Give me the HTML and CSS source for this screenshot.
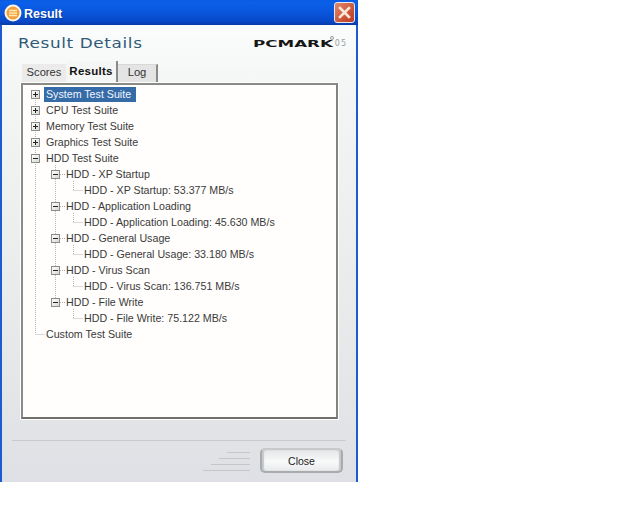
FILE: index.html
```html
<!DOCTYPE html>
<html lang="en">
<head>
<meta charset="utf-8">
<title>Result</title>
<link rel="stylesheet" href="styles.css">
</head>
<body>
<div class="window">
  <header class="titlebar">
    <svg class="appicon" width="18" height="18" viewBox="0 0 18 18"><circle cx="9" cy="9" r="8.5" fill="#fff3e0"/><circle cx="9" cy="9" r="6.5" fill="#f0a040"/><path d="M5 6.5h8M5 9h8M5 11.5h8" stroke="#ffe8b0" stroke-width="1.3"/></svg>
    <span class="title">Result</span>
    <button class="closex" aria-label="Close"><svg width="21" height="21" viewBox="0 0 21 21"><path d="M6 6l9 9M15 6l-9 9" stroke="#fbe6da" stroke-width="2.6" stroke-linecap="square"/></svg></button>
  </header>
  <div class="client">
    <div class="heading">
      <h1>Result Details</h1>
      <div class="logo"><span class="logomark">PCMARK</span><span class="logoyear">05</span></div>
    </div>
    <div class="tabs">
      <span class="tab scores">Scores</span>
      <span class="tab active">Results</span>
      <span class="tab log">Log</span>
    </div>
    <div class="panel">
      <svg class="lines" width="120" height="260" viewBox="0 0 120 260">
        <path d="M12.5 13V249M12.5 249.5H22M32.5 80V213M37 89.5H42M37 121.5H42M37 153.5H42M37 185.5H42M37 217.5H42M50.5 96V105M50.5 105.5H60M50.5 128V137M50.5 137.5H60M50.5 160V169M50.5 169.5H60M50.5 192V201M50.5 201.5H60M50.5 224V233M50.5 233.5H60" fill="none" stroke="#b4b4b4" stroke-dasharray="1 1"/>
      </svg>
      <ul class="tree">
        <li class="row"><span class="box plus"></span><span class="label selected">System Test Suite</span></li>
        <li class="row"><span class="box plus"></span><span class="label">CPU Test Suite</span></li>
        <li class="row"><span class="box plus"></span><span class="label">Memory Test Suite</span></li>
        <li class="row"><span class="box plus"></span><span class="label">Graphics Test Suite</span></li>
        <li class="row"><span class="box minus"></span><span class="label">HDD Test Suite</span></li>
        <li class="row lvl1"><span class="box minus"></span><span class="label">HDD - XP Startup</span></li>
        <li class="row lvl2"><span class="label">HDD - XP Startup: 53.377 MB/s</span></li>
        <li class="row lvl1"><span class="box minus"></span><span class="label">HDD - Application Loading</span></li>
        <li class="row lvl2"><span class="label">HDD - Application Loading: 45.630 MB/s</span></li>
        <li class="row lvl1"><span class="box minus"></span><span class="label">HDD - General Usage</span></li>
        <li class="row lvl2"><span class="label">HDD - General Usage: 33.180 MB/s</span></li>
        <li class="row lvl1"><span class="box minus"></span><span class="label">HDD - Virus Scan</span></li>
        <li class="row lvl2"><span class="label">HDD - Virus Scan: 136.751 MB/s</span></li>
        <li class="row lvl1"><span class="box minus"></span><span class="label">HDD - File Write</span></li>
        <li class="row lvl2"><span class="label">HDD - File Write: 75.122 MB/s</span></li>
        <li class="row leaf"><span class="label">Custom Test Suite</span></li>
      </ul>
    </div>
    <div class="footer">
      <svg class="stripes" width="50" height="24" viewBox="0 0 50 24"><path d="M25 3.5H48M17 9.5H48M9 15.5H48M1 21.5H48" stroke="#c4c6c8" fill="none"/></svg>
      <button class="closebtn">Close</button>
    </div>
  </div>
</div>
</body>
</html>
```
FILE: styles.css
```css
html, body { margin: 0; padding: 0; background: #fff; }
body { width: 640px; height: 512px; overflow: hidden; font-family: "Liberation Sans", Arial, sans-serif; }
.window {
  width: 358px; height: 482px; display: flex; flex-direction: column; box-sizing: border-box;
  border-left: 2px solid #1f5bd0; border-right: 2px solid #1f5bd0;
}
.titlebar {
  height: 25px; margin: 0 -2px; flex: none; display: flex; align-items: center; padding: 0 2px 0 4px;
  background: linear-gradient(#0a5ae0 0, #0a60ea 8%, #0a56dc 50%, #0848c8 85%, #083aa8 100%);
}
.appicon { flex: none; }
.title { margin-left: 2px; padding-top: 2px; flex: 1; color: #fff; font-size: 12.5px; font-weight: bold; text-shadow: 1px 1px 0 #0a3a9a; }
.closex {
  width: 21px; height: 21px; padding: 0; display: block; box-sizing: border-box; border: 1px solid #e8e8f0; border-radius: 3px;
  background: linear-gradient(135deg, #e08a6c, #c84e30 70%, #b84028);
  margin-right: 1px;
}
.closex svg { display: block; margin: -1px; }
.client {
  flex: 1; display: flex; flex-direction: column; padding: 0 10px 0 10px;
  background: linear-gradient(#fbfcfc 0, #f4f5f5 60px, #e6e7e8 340px, #dfe0e5 100%);
}
.heading { height: 36px; display: flex; align-items: center; justify-content: space-between; flex: none; padding: 0 0 0 6px; }
h1 { margin: 0; color: #2f5b78; font: normal 14.5px "DejaVu Sans", sans-serif; letter-spacing: .55px; transform: scaleX(1.16); transform-origin: left; }
.logo { position: relative; display: flex; align-items: flex-start; height: 12px; margin: 2px -1px 0 0; }
.logo::after { content: ""; position: absolute; left: 77px; top: -2px; width: 2px; height: 2px; border: 1px solid #999; border-radius: 50%; }
.logomark { display: block; color: #161616; font: bold 9.5px/12px "DejaVu Sans", sans-serif; width: 82px; transform: scaleX(1.76); transform-origin: left; }
.logoyear { display: block; color: #a0a0a0; font: 8px/11px "DejaVu Sans", sans-serif; letter-spacing: 1px; }
.tabs { display: flex; align-items: flex-end; height: 22px; flex: none; margin-left: 10px; font-size: 11.2px; color: #333; }
.tab { display: block; box-sizing: border-box; text-align: center; }
.scores { width: 44px; height: 19px; line-height: 16px; background: #ebebeb; }
.active { width: 52px; height: 22px; line-height: 20px; font-size: 11.5px; font-weight: bold; color: #111; background: #f4f5f5; border-right: 2px solid #8a8a88; letter-spacing: .25px; }
.log { width: 40px; height: 19px; line-height: 15px; background: #e4e4e4; border-right: 2px solid #8a8a88; border-top: 1px solid #d8d8d8; }
.panel {
  position: relative; width: 317px; height: 336px; box-sizing: border-box; flex: none; margin-left: 9px; background: #fffefc;
  border: 2px solid; border-color: #8a8a86 #84847f #6f6f6a #8a8a86; outline: 1px solid #fff; padding: 1px 0 0 8px;
}
.lines { position: absolute; left: 0; top: 0; }
.tree { position: relative; list-style: none; margin: 0; padding: 0; font-size: 10.67px; color: #3a3a3a; }
.row { height: 16px; display: flex; align-items: center; }
.lvl1 { padding-left: 20px; }
.lvl2 { padding-left: 51px; }
.leaf { padding-left: 13px; }
.box {
  position: relative; box-sizing: border-box; width: 9px; height: 9px; flex: none; margin-right: 4px; border: 1px solid #8c8c8c;
  background: linear-gradient(135deg, #fff, #d8d8d0);
}
.box::before { content: ""; position: absolute; left: 1px; top: 3px; width: 5px; height: 1px; background: #222; }
.plus::after { content: ""; position: absolute; left: 3px; top: 1px; width: 1px; height: 5px; background: #222; }
.label { display: block; line-height: 15px; padding: 0 2px; white-space: nowrap; }
.selected { background: #356ca8; color: #f4f4ff; padding-right: 5px; }
.footer {
  flex: 1; display: flex; justify-content: flex-end; align-items: flex-start; margin-top: 21px;
  border-top: 1px solid #c8cacc; padding-right: 3px;
}
.stripes { margin-top: 8px; margin-right: 8px; }
.closebtn {
  width: 83px; height: 25px; margin-top: 7px; padding: 0; border: 2px solid #a8acac; border-top-color: #c8caca; border-radius: 5px;
  box-shadow: inset 2px 0 1px #c4c8c8, inset -2px 0 1px #c4c8c8;
  background: linear-gradient(#e4e6e8, #f8f9f9 55%, #e8eaec); color: #1a1a1a; font: 10.5px "Liberation Sans", sans-serif;
}
```
